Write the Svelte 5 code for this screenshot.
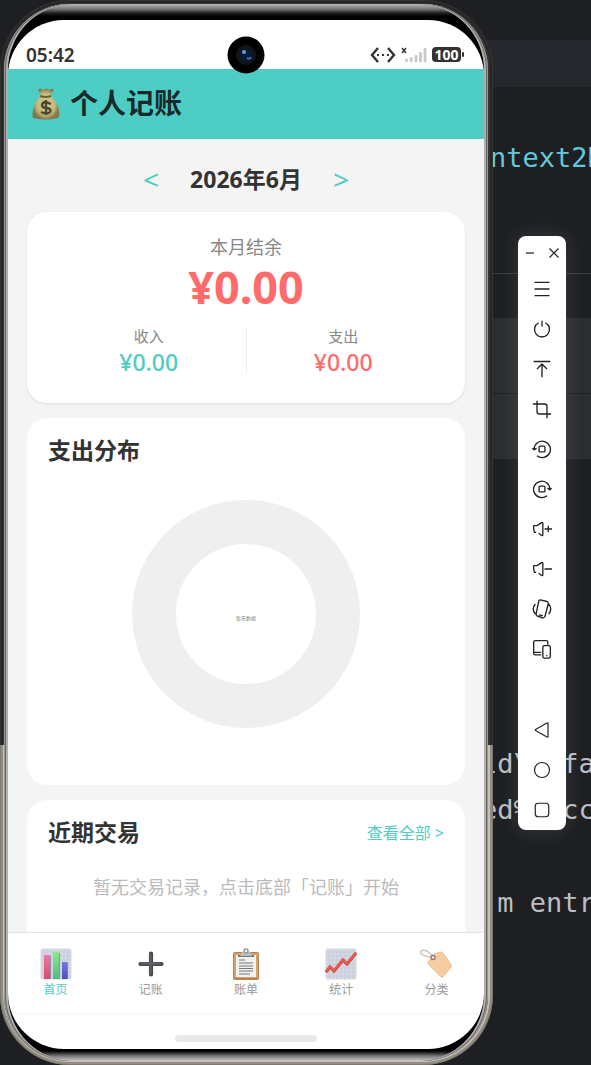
<script>
  let month = $state(6);
  let year = $state(2026);
  let active = $state('首页');
  const tabs = [
    ['首页', 'chart'],
    ['记账', 'plus'],
    ['账单', 'board'],
    ['统计', 'trend'],
    ['分类', 'tag']
  ];
  const tools = [
    ['菜单', 'M3 4h18M3 12h18M3 20h18'],
    ['电源', 'M8 4.500a9 9 0 1 0 8 0M12 2v7'],
    ['置顶', 'M2 3h20M12 22V7M6 12l6-6 6 6'],
    ['截屏', 'M6 2v13a3 3 0 0 0 3 3h14M1 6h14a3 3 0 0 1 3 3v14'],
    ['左转', 'M2.500 12A9.800 9.800 0 1 1 6 20M.5 11l2 2 3-2M9.500 8.500h5q1 0 1 1v5q0 1-1 1h-5q-1 0-1-1v-5q0-1 1-1z'],
    ['右转', 'M21.500 12A9.800 9.800 0 1 0 18 20M23.500 11l-2 2-3-2M9.500 8.500h5q1 0 1 1v5q0 1-1 1h-5q-1 0-1-1v-5q0-1 1-1z'],
    ['音量加', 'M5 16H3l-1-4V8h4M6 8l6-4q1 0 1 1v14q0 1-1 1l-4-3M15 12h9M19.500 8v8'],
    ['音量减', 'M5 16H3l-1-4V8h4M6 8l6-4q1 0 1 1v14q0 1-1 1l-4-3M15 12h9'],
    ['旋转', 'M10 1l8 2q2 1 1.500 3l-4 15q-1 2-3 1.500l-6-2q-2-1-1.500-3L8 3q0-2 2-2zM8 19l5 1M4 6q-5 6 0 12M20 6q5 6 0 12'],
    ['多设备', 'M19 7V4q0-2-2-2H4Q2 2 2 4v13q0 2 2 2h7M2 16h9M15 8h5q2 0 2 2v11q0 2-2 2h-5q-2 0-2-2V10q0-2 2-2zM17 20h1.500']
  ];
  const nav = [
    ['返回', 'M20 3v18q0 1-2 0L4 13q-2-1 0-2L18 3q2-1 2 0z'],
    ['主屏幕', 'M12 2a10 10 0 1 0 0 20a10 10 0 1 0 0-20z'],
    ['最近任务', 'M7 3h10q4 0 4 4v10q0 4-4 4H7q-4 0-4-4V7q0-4 4-4z']
  ];
  function step(n) {
    month += n;
    if (month < 1) { month = 12; year -= 1; }
    if (month > 12) { month = 1; year += 1; }
  }
</script>

<div class="desk">
  <div class="phone">
    <div class="bezel">
      <div class="screen">
        <div class="status">
          <span class="clock">05:42</span>
          <div class="signals">
            <svg width="26" height="16" viewBox="0 0 26 16" fill="none" stroke="#333" stroke-width="2.400"><path d="M8 1L2 8l6 7M18 1l6 7-6 7" /><path d="M7 8h2M12 8h2M17 8h2" stroke-width="2" /></svg>
            <svg width="26" height="16" viewBox="0 0 26 16"><path d="M1 1l4 5M5 1l-4 5" stroke="#333" stroke-width="1.400" /><path d="M5.500 13v1M10.200 11.500V14M15 9.500V14M19.500 6.500V14M24 2.500V14" stroke="#c8c8c8" stroke-width="2.800" stroke-linecap="round" /></svg>
            <span class="battery">100</span>
          </div>
        </div>
        <div class="camera">
          <svg width="38" height="38" viewBox="0 0 38 38"><circle cx="19" cy="19" r="18.500" fill="#000" /><circle cx="19" cy="19" r="10" fill="#11151b" /><circle cx="19" cy="19" r="6" fill="#081c3a" /><circle cx="17" cy="16" r="2" fill="#5d9fdc" /><path d="M20 22q3 2 4-1" stroke="#3375b9" stroke-width="2" fill="none" /></svg>
        </div>
        <header>
          <svg width="28" height="32" viewBox="0 0 28 32">
            <defs><radialGradient id="bag"><stop offset="0" stop-color="#d8cf95" /><stop offset=".7" stop-color="#c2b77c" /><stop offset="1" stop-color="#81784b" /></radialGradient></defs>
            <path d="M9 8L6 2q2-3 5 0 3-3 6 0 3-2 5 0l-4 6q9 7 9 15 1 5-1 7-12 3-25 0-1-2 0-8Q3 13 9 8z" fill="url(#bag)" />
            <path d="M8 8q6 2 11 0" stroke="#6a6039" stroke-width="2" fill="none" />
            <path d="M19 16q-8-4-9 1 0 3 5 3 5 1 3 4-3 3-9 0M14 12v15" stroke="#4d482e" stroke-width="2.400" fill="none" />
          </svg>
          <h1>个人记账</h1>
        </header>
        <main>
          <div class="month">
            <button aria-label="上个月" onclick={() => step(-1)}>&lt;</button>
            <h2>{year}年{month}月</h2>
            <button aria-label="下个月" onclick={() => step(1)}>&gt;</button>
          </div>
          <section class="card summary">
            <p class="label">本月结余</p>
            <p class="total">¥0.00</p>
            <div class="split">
              <div><p>收入</p><strong class="in">¥0.00</strong></div>
              <i class="rule"></i>
              <div><p>支出</p><strong>¥0.00</strong></div>
            </div>
          </section>
          <section class="card dist">
            <h2>支出分布</h2>
            <div class="ring"><span>暂无数据</span></div>
          </section>
          <section class="card recent">
            <div class="row"><h2>近期交易</h2><a href="#all">查看全部 &gt;</a></div>
            <p class="empty">暂无交易记录，点击底部「记账」开始</p>
          </section>
        </main>
        <nav class="tabs">
          {#each tabs as [name, icon]}
            <button class:on={active === name} onclick={() => (active = name)}>
              <svg width="32" height="32" viewBox="0 0 32 32">
                {#if icon === 'chart' || icon === 'trend'}
                  <rect x=".5" y=".5" width="31" height="31" rx="2" fill="#d5d9e4" />
                  <path d="M4 1v30M8 1v30M12 1v30M16 1v30M20 1v30M24 1v30M28 1v30M1 4h30M1 8h30M1 12h30M1 16h30M1 20h30M1 24h30M1 28h30" stroke="#c3c9d8" stroke-width=".7" />
                {/if}
                {#if icon === 'chart'}
                  <defs>
                    <linearGradient id="pink" x2="0" y2="1"><stop stop-color="#ef789e" /><stop offset="1" stop-color="#d84b73" /></linearGradient>
                    <linearGradient id="green" x2="0" y2="1"><stop stop-color="#87ee82" /><stop offset="1" stop-color="#55b985" /></linearGradient>
                    <linearGradient id="blue" x2="0" y2="1"><stop stop-color="#7775e8" /><stop offset="1" stop-color="#504dbb" /></linearGradient>
                  </defs>
                  <path d="M10 8h1v23h-1zM19 5h1v26h-1zM27 15h1v16h-1z" fill="#8d94a5" />
                  <rect x="4" y="7" width="6" height="24" fill="url(#pink)" /><rect x="13" y="4" width="6" height="27" fill="url(#green)" /><rect x="22" y="14" width="5.500" height="17" fill="url(#blue)" />
                {:else if icon === 'plus'}
                  <path d="M16 5.500v21M5.500 16h21" stroke="#47484d" stroke-width="4.200" stroke-linecap="round" /><path d="M15.500 6v20M6 15.500h20" stroke="#626369" stroke-width="2" />
                {:else if icon === 'board'}
                  <rect x="3" y="4" width="26" height="28" rx="2" fill="#b78450" /><rect x="4" y="5" width="24" height="25" rx="1" fill="#d2a36c" /><path d="M6 7h20v22H6z" fill="#f1f1f1" /><path d="M8 8h16" stroke="#777" stroke-width="2" /><path d="M12 4h8l2 4H10z" fill="#bcc0bf" /><circle cx="16" cy="3" r="2" fill="none" stroke="#92a09c" stroke-width="1.500" /><path d="M9 12h6M9 15h14M9 18h14M9 20.500h14M9 23h14M9 26h11" stroke="#777" stroke-width="1.200" />
                {:else if icon === 'trend'}
                  <path d="M1 24l4-5 4 4 9-11 4 4 9-11" fill="none" stroke="#b83d39" stroke-width="3" /><path d="M1 23.500l4-5 4 4 9-11 4 4 9-11" fill="none" stroke="#ec5b4d" stroke-width="2.200" />
                {:else}
                  <path d="M14 6l6-2q2 0 3 1l9 13-9 11q-1 1-2 0L9 17q-1-1-1-3z" fill="#f5cda0" stroke="#edc494" stroke-linejoin="round" /><path d="M13 9Q3 9 .5 5 0 1 7 3l6 5" fill="none" stroke="#cbc7bd" stroke-width="1.500" /><circle cx="13" cy="9.500" r="2" fill="#fff" stroke="#92736b" stroke-width="1.300" />
                {/if}
              </svg>
              <span>{name}</span>
            </button>
          {/each}
        </nav>
        <div class="home"><i></i></div>
      </div>
    </div>
  </div>

  <div class="editor">
    <span class="band one"></span><span class="band two"></span><span class="band three"></span>
    <code class="c1">ntext2R</code><code class="c2">{'ld\\  fa'}</code><code class="c3">{'ed%  cc'}</code><code class="c4">-m entr</code>
    <aside>
      <div class="window">
        <button aria-label="最小化"><svg width="10" height="10" viewBox="0 0 10 10"><path d="M1 5h8" /></svg></button>
        <button aria-label="关闭"><svg width="10" height="10" viewBox="0 0 10 10"><path d="M.5.5l9 9M9.500.5l-9 9" /></svg></button>
      </div>
      {#each tools as [name, d]}
        <button class="tool" aria-label={name}><svg width="20" height="20" viewBox="0 0 24 24"><path {d} /></svg></button>
      {/each}
      <div class="space"></div>
      {#each nav as [name, d]}
        <button class="tool" aria-label={name}><svg width="18" height="18" viewBox="0 0 24 24"><path {d} /></svg></button>
      {/each}
    </aside>
  </div>
</div>

<style>
  :global(body) { margin: 0; background: #1e1f22; }
  * { box-sizing: border-box; }
  h1, h2, p { margin: 0; }
  button { border: 0; padding: 0; background: none; font: inherit; color: inherit; cursor: pointer; }
  svg { display: block; flex: none; }
  .desk { display: flex; min-height: 100vh; overflow: hidden; background: #1e1f22; font-family: "Noto Sans", "Noto Sans CJK SC", sans-serif; color: #333; }
  .phone { flex: 1; min-width: 0; display: flex; margin-bottom: 1px; padding: 4px 5px 4px 4px; border-radius: 70px; position: relative; z-index: 1; background: linear-gradient(#353535 0 70%, #c9c0b3 70%); box-shadow: inset 0 0 0 1px #55525055, inset 0 0 0 3px #00000044; }
  .bezel { flex: 1; min-width: 0; display: flex; padding: 16px 4px 12px; border-radius: 66px; background: linear-gradient(#b8b8b8, #777 5px, #222 9px, #000 12px, #000 calc(100% - 10px), #777 calc(100% - 5px), #ccc); box-shadow: inset 1px 0 #999, inset -1px 0 #999, inset 2px 0 #666, inset -2px 0 #666, inset 4px 0 #b0b0b0, inset -4px 0 #b0b0b0; }
  .screen { flex: 1; min-width: 0; display: flex; flex-direction: column; position: relative; overflow: hidden; border-radius: 56px; background: #fff; }
  .status { height: 49px; padding: 20px 20px 0 18px; display: flex; justify-content: space-between; align-items: center; }
  .clock { font-size: 19px; font-weight: 600; }
  .signals { display: flex; align-items: center; gap: 5px; }
  .battery { position: relative; width: 29px; height: 15px; border-radius: 4px; background: #333; color: #fff; font-size: 14px; line-height: 15px; font-weight: 700; text-align: center; margin-right: 3px; }
  .battery::after { content: ""; position: absolute; right: -3px; top: 5px; width: 2px; height: 5px; border-radius: 1px; background: #333; }
  .camera { position: absolute; left: 50%; top: 16px; transform: translateX(-50%); }
  header { height: 70px; padding: 0 24px; display: flex; align-items: center; gap: 10px; background: #4ecdc4; color: #172a29; }
  h1 { font-size: 28px; line-height: 36px; font-weight: 700; padding-bottom: 2px; }
  main { flex: 1; padding: 16px 19px 0; background: #f4f4f4; }
  .month { height: 48px; margin-bottom: 9px; display: flex; justify-content: center; align-items: center; gap: 31px; }
  .month button { color: #4ecdc4; font-size: 28px; line-height: 32px; }
  h2 { font-size: 23px; line-height: 32px; font-weight: 700; }
  .card { border-radius: 20px; background: #fff; margin-bottom: 15px; padding: 16px 21px; }
  .summary { height: 191px; padding-top: 21px; text-align: center; box-shadow: 0 1px 3px #00000016; }
  .label { font-size: 18px; line-height: 28px; color: #888; }
  .total { color: #ff6b6b; font-size: 45px; line-height: 52px; font-weight: 700; }
  .split { display: grid; grid-template-columns: 1fr 1px 1fr; align-items: center; margin: 12px 4px 0; }
  .rule { height: 46px; background: #eee; }
  .split p { font-size: 15px; line-height: 22px; color: #888; }
  .split strong { display: block; font-size: 23px; line-height: 30px; font-weight: 500; color: #ff6b6b; }
  .split .in { color: #4ecdc4; }
  .dist { height: 367px; }
  .ring { width: 228px; aspect-ratio: 1; margin: 34px auto 0; border: 44px solid #efefef; border-radius: 50%; display: grid; place-items: center; padding-top: 6px; font-size: 5px; color: #888; }
  .recent { height: 132px; margin-bottom: 0; border-radius: 20px 20px 0 0; }
  .row { display: flex; align-items: center; justify-content: space-between; }
  .row a { color: #4ecdc4; font-size: 16px; text-decoration: none; }
  .empty { margin: 25px -4px 0; text-align: center; font-size: 18px; line-height: 28px; color: #bbb; }
  .tabs { height: 82px; display: grid; grid-template-columns: repeat(5, 1fr); border-top: 1px solid #e4e4e4; border-bottom: 1px solid #f7f7f7; color: #999; }
  .tabs button { display: flex; flex-direction: column; align-items: center; padding-top: 15px; font-size: 12px; line-height: 19px; }
  .tabs .on { color: #4ecdc4; }
  .home { height: 35px; padding-top: 21px; }
  .home i { display: block; width: 142px; height: 7px; margin: auto; border-radius: 4px; background: #e9e9e9; }
  .editor { flex: 0 0 98px; position: relative; }
  .band { position: absolute; left: -8px; right: 0; background: #27282d; }
  .one { top: 40px; height: 47px; }
  .two { top: 273px; height: 1px; background: #393b40; }
  .three { top: 318px; height: 141px; background: linear-gradient(#2b2d31 75px, #1e1f22 75px 76px, #2b2d31 76px); }
  code { position: absolute; left: -12px; font: 27px/32px "DejaVu Sans Mono", monospace; color: #bcbec4; white-space: pre; }
  .c1 { top: 142px; left: -3px; color: #63c8dc; }
  .c2 { top: 748px; }
  .c3 { top: 794px; }
  .c4 { top: 887px; }
  aside { position: absolute; top: 236px; left: 25px; width: 48px; height: 594px; border-radius: 8px; background: #fff; box-shadow: 0 0 20px #ffffff20; color: #222; display: flex; flex-direction: column; }
  aside svg { fill: none; stroke: currentColor; stroke-width: 1.6; stroke-linejoin: round; }
  .window { height: 33px; padding: 0 7px; display: flex; justify-content: space-between; align-items: center; }
  .window svg { stroke-width: 1.2; }
  .tool { height: 40px; display: grid; place-items: center; }
  .space { height: 41px; }
</style>
